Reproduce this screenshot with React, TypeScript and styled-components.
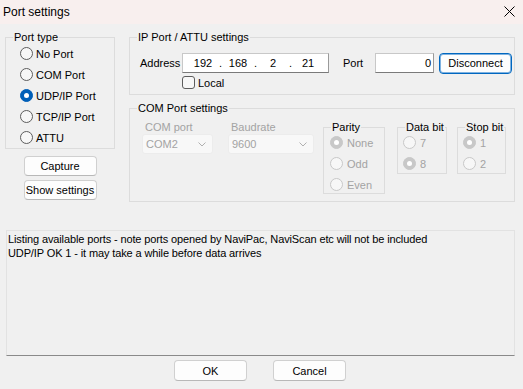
import styled, { createGlobalStyle } from "styled-components";

const GlobalStyle = createGlobalStyle`
  html, body {
    margin: 0;
    padding: 0;
    background: #f0f0f0;
  }
  body {
    font-family: "Liberation Sans", Arial, sans-serif;
    font-size: 11px;
    color: #000;
  }
  * {
    box-sizing: border-box;
  }
`;

const Window = styled.div`
  width: 523px;
  height: 389px;
  display: flex;
  flex-direction: column;
  background: #f0f0f0;
  overflow: hidden;
`;

const TitleBar = styled.div`
  flex: none;
  height: 24px;
  display: flex;
  align-items: center;
  justify-content: space-between;
  padding: 0 8px 1px 3px;
  background: #f8efee;
  font-size: 12px;
`;

const Body = styled.div`
  flex: 1;
  display: flex;
  flex-direction: column;
  padding: 13px 8px 0 5px;
`;

const TopRow = styled.div`
  display: flex;
  align-items: flex-start;
  gap: 14px;
`;

const LeftColumn = styled.div`
  width: 110px;
  display: flex;
  flex-direction: column;
  align-items: center;
  gap: 4px;
`;

const RightColumn = styled.div`
  width: 386px;
  display: flex;
  flex-direction: column;
  gap: 13px;
`;

// group box: border with a caption sitting over its top edge
const Group = styled.div<{ $w?: number; $h: number; $pt: number }>`
  position: relative;
  flex: none;
  width: ${(p) => (p.$w ? `${p.$w}px` : "100%")};
  height: ${(p) => p.$h}px;
  padding-top: ${(p) => p.$pt}px;
  border: 1px solid #dcdcdc;
`;

const Caption = styled.span`
  position: absolute;
  top: -7px;
  left: 7px;
  padding: 0 1px;
  line-height: 13px;
  background: #f0f0f0;
  white-space: nowrap;
`;

const RadioList = styled.div<{ $left: number }>`
  display: flex;
  flex-direction: column;
  padding-left: ${(p) => p.$left}px;
`;

const RadioRow = styled.div<{ $disabled?: boolean; $gap: number }>`
  height: 21px;
  display: flex;
  align-items: center;
  gap: ${(p) => p.$gap}px;
  color: ${(p) => (p.$disabled ? "#a3a3a3" : "#000")};
  white-space: nowrap;
`;

const RadioCircle = styled.span<{ $checked?: boolean; $disabled?: boolean }>`
  flex: none;
  width: 13px;
  height: 13px;
  border-radius: 50%;
  display: flex;
  align-items: center;
  justify-content: center;
  border: 1px solid
    ${(p) => (p.$disabled ? "#c8c8c8" : p.$checked ? "#005fb8" : "#5d5d5d")};
  background: ${(p) =>
    p.$checked ? (p.$disabled ? "#c8c8c8" : "#005fb8") : "#f7f7f7"};

  &::after {
    content: "";
    display: ${(p) => (p.$checked ? "block" : "none")};
    width: 5px;
    height: 5px;
    border-radius: 50%;
    background: #fff;
  }
`;

const Button = styled.button<{ $focused?: boolean }>`
  width: 73px;
  height: 21px;
  padding: 0;
  font: inherit;
  color: #000;
  background: #fdfdfd;
  border: 1px solid ${(p) => (p.$focused ? "#0067c0" : "#d0d0d0")};
  border-bottom-color: ${(p) => (p.$focused ? "#0067c0" : "#b8b8b8")};
  box-shadow: ${(p) => (p.$focused ? "inset 0 0 0 1px #7fb2e0" : "none")};
  border-radius: 4px;
  flex: none;
`;

const CaptureButton = styled(Button)`
  margin-top: 3px;
  height: 20px;
`;

const SettingsButton = styled(Button)`
  height: 20px;
`;

const IpContent = styled.div`
  padding-left: 10px;
  display: flex;
  flex-direction: column;
`;

const AddressRow = styled.div`
  height: 20px;
  display: flex;
  align-items: center;
`;

const FieldLabel = styled.span<{ $w: number; $ml?: number }>`
  width: ${(p) => p.$w}px;
  margin-left: ${(p) => p.$ml ?? 0}px;
  flex: none;
`;

const EditBox = styled.div<{ $w: number }>`
  width: ${(p) => p.$w}px;
  height: 20px;
  flex: none;
  display: flex;
  align-items: center;
  background: #fff;
  border: 1px solid #c8c8c8;
  border-bottom-color: #7a7a7a;
  border-right-color: #9a9a9a;
`;

const IpBox = styled(EditBox)`
  padding-left: 5px;
`;

const PortBox = styled(EditBox)`
  justify-content: flex-end;
  padding-right: 2px;
`;

const IpNumber = styled.span`
  width: 30px;
  text-align: center;
`;

const IpDot = styled.span`
  width: 5px;
  text-align: center;
`;

const DisconnectButton = styled(Button)`
  margin-left: 5px;
`;

const LocalRow = styled.label`
  margin: 3px 0 0 42px;
  height: 13px;
  display: flex;
  align-items: center;
  gap: 3px;
`;

const CheckBox = styled.span`
  width: 13px;
  height: 13px;
  border: 1px solid #5d5d5d;
  border-radius: 3px;
  background: #f7f7f7;
  flex: none;
`;

const ComContent = styled.div`
  padding-left: 12px;
  display: flex;
  align-items: flex-start;
`;

const ComboField = styled.div<{ $mr: number }>`
  display: flex;
  flex-direction: column;
  margin-right: ${(p) => p.$mr}px;
`;

const ComboLabel = styled.span`
  line-height: 13px;
  padding-left: 3px;
  color: #a3a3a3;
`;

const Combo = styled.div<{ $w: number }>`
  width: ${(p) => p.$w}px;
  height: 20px;
  display: flex;
  align-items: center;
  justify-content: space-between;
  padding: 0 6px 0 3px;
  background: #f8f8f8;
  border: 1px solid #ececec;
  border-radius: 3px;
  color: #a3a3a3;
`;

const SmallGroups = styled.div`
  margin-top: 6px;
  display: flex;
  align-items: flex-start;
`;

const SmallGroup = styled(Group)<{ $ml?: number }>`
  margin-left: ${(p) => p.$ml ?? 0}px;
`;

const LogArea = styled.div`
  margin: 28px 0 0 1px;
  height: 126px;
  padding: 1px;
  border: 1px solid #e2e2e2;
  border-bottom-color: #8a8a8a;
  line-height: 14px;
  letter-spacing: -0.12px;
  white-space: pre;
`;

const ButtonRow = styled.div`
  margin-top: 4px;
  display: flex;
  justify-content: center;
  gap: 26px;
`;

const Chevron = () => (
  <svg width="8" height="5" viewBox="0 0 8 5">
    <polyline points="0.5,0.5 4,4 7.5,0.5" fill="none" stroke="#b0b0b0" strokeWidth="1" />
  </svg>
);

const CloseIcon = () => (
  <svg width="11" height="11" viewBox="0 0 11 11">
    <path d="M0.5 0.5 L10.5 10.5 M10.5 0.5 L0.5 10.5" stroke="#000" strokeWidth="1" />
  </svg>
);

type RadioProps = { label: string; checked?: boolean; disabled?: boolean; gap?: number };

const Radio = ({ label, checked, disabled, gap = 4 }: RadioProps) => (
  <RadioRow $disabled={disabled} $gap={gap}>
    <RadioCircle $checked={checked} $disabled={disabled} />
    <span>{label}</span>
  </RadioRow>
);

export default function App() {
  return (
    <>
      <GlobalStyle />
      <Window>
        <TitleBar>
          <span>Port settings</span>
          <CloseIcon />
        </TitleBar>
        <Body>
          <TopRow>
            <LeftColumn>
              <Group $w={110} $h={112} $pt={5}>
                <Caption>Port type</Caption>
                <RadioList $left={14}>
                  <Radio gap={3} label="No Port" />
                  <Radio gap={3} label="COM Port" />
                  <Radio gap={3} label="UDP/IP Port" checked />
                  <Radio gap={3} label="TCP/IP Port" />
                  <Radio gap={3} label="ATTU" />
                </RadioList>
              </Group>
              <CaptureButton>Capture</CaptureButton>
              <SettingsButton>Show settings</SettingsButton>
            </LeftColumn>

            <RightColumn>
              <Group $h={58} $pt={15}>
                <Caption>IP Port / ATTU settings</Caption>
                <IpContent>
                  <AddressRow>
                    <FieldLabel $w={42}>Address</FieldLabel>
                    <IpBox $w={147}>
                      <IpNumber>192</IpNumber>
                      <IpDot>.</IpDot>
                      <IpNumber>168</IpNumber>
                      <IpDot>.</IpDot>
                      <IpNumber>2</IpNumber>
                      <IpDot>.</IpDot>
                      <IpNumber>21</IpNumber>
                    </IpBox>
                    <FieldLabel $w={32} $ml={14}>Port</FieldLabel>
                    <PortBox $w={59}>0</PortBox>
                    <DisconnectButton $focused>Disconnect</DisconnectButton>
                  </AddressRow>
                  <LocalRow>
                    <CheckBox />
                    <span>Local</span>
                  </LocalRow>
                </IpContent>
              </Group>

              <Group $h={94} $pt={12}>
                <Caption>COM Port settings</Caption>
                <ComContent>
                  <ComboField $mr={15}>
                    <ComboLabel>COM port</ComboLabel>
                    <Combo $w={71}>
                      <span>COM2</span>
                      <Chevron />
                    </Combo>
                  </ComboField>
                  <ComboField $mr={9}>
                    <ComboLabel>Baudrate</ComboLabel>
                    <Combo $w={86}>
                      <span>9600</span>
                      <Chevron />
                    </Combo>
                  </ComboField>
                  <SmallGroups>
                    <SmallGroup $w={62} $h={67} $pt={4}>
                      <Caption>Parity</Caption>
                      <RadioList $left={6}>
                        <Radio label="None" checked disabled />
                        <Radio label="Odd" disabled />
                        <Radio label="Even" disabled />
                      </RadioList>
                    </SmallGroup>
                    <SmallGroup $w={50} $h={47} $pt={4} $ml={12}>
                      <Caption>Data bit</Caption>
                      <RadioList $left={5}>
                        <Radio label="7" disabled />
                        <Radio label="8" checked disabled />
                      </RadioList>
                    </SmallGroup>
                    <SmallGroup $w={49} $h={47} $pt={4} $ml={10}>
                      <Caption>Stop bit</Caption>
                      <RadioList $left={5}>
                        <Radio label="1" checked disabled />
                        <Radio label="2" disabled />
                      </RadioList>
                    </SmallGroup>
                  </SmallGroups>
                </ComContent>
              </Group>
            </RightColumn>
          </TopRow>

          <LogArea>
            {"Listing available ports - note ports opened by NaviPac, NaviScan etc will not be included\nUDP/IP OK 1 - it may take a while before data arrives"}
          </LogArea>

          <ButtonRow>
            <Button>OK</Button>
            <Button>Cancel</Button>
          </ButtonRow>
        </Body>
      </Window>
    </>
  );
}
